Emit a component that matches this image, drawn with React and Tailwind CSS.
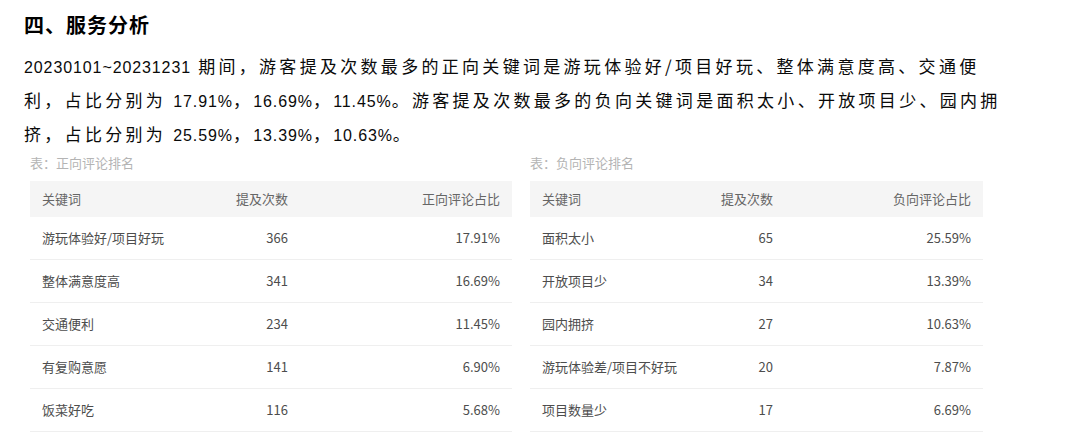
import React from "react";

const pos = [
  ["游玩体验好/项目好玩", "366", "17.91%"],
  ["整体满意度高", "341", "16.69%"],
  ["交通便利", "234", "11.45%"],
  ["有复购意愿", "141", "6.90%"],
  ["饭菜好吃", "116", "5.68%"],
];
const neg = [
  ["面积太小", "65", "25.59%"],
  ["开放项目少", "34", "13.39%"],
  ["园内拥挤", "27", "10.63%"],
  ["游玩体验差/项目不好玩", "20", "7.87%"],
  ["项目数量少", "17", "6.69%"],
];

function N({ children }) {
  return (
    <span className="font-['Liberation_Sans',sans-serif] text-[16px] tracking-[0.9px]">
      {children}
    </span>
  );
}

function Table({ caption, head, rows, width, cols }) {
  return (
    <div className={width}>
      <div className="h-[20px] leading-[20px] text-[13px] text-[#b4b4b4]">{caption}</div>
      <div className="mt-[8px]">
        <div className={`grid ${cols} h-[36px] items-center bg-[#f5f5f5] text-[13px] text-[#666]`}>
          <div className="pl-[12px]">{head[0]}</div>
          <div className="pr-[12px] text-right">{head[1]}</div>
          <div className="pr-[12px] text-right">{head[2]}</div>
        </div>
        {rows.map((r) => (
          <div
            key={r[0]}
            className={`grid ${cols} h-[43px] items-center border-b border-[#efefef] text-[13px] text-[#4d4d4d]`}
          >
            <div className="pl-[12px] whitespace-nowrap">{r[0]}</div>
            <div className="pr-[12px] text-right">{r[1]}</div>
            <div className="pr-[12px] text-right">{r[2]}</div>
          </div>
        ))}
      </div>
    </div>
  );
}

export default function App() {
  return (
    <div className="w-[1076px] h-[441px] bg-white overflow-hidden font-['Noto_Sans_CJK_SC',sans-serif]">
      <div className="px-[24px] pt-[11px]">
        <h1 className="text-[20px] leading-[28px] font-bold tracking-[1px] text-black">四、服务分析</h1>
        <div className="mt-[11px] text-[17px] leading-[32px] tracking-[3.3px] text-[#0a0a0a] whitespace-nowrap">
          <div>
            <N>20230101~20231231</N> 期间，游客提及次数最多的正向关键词是游玩体验好/项目好玩、整体满意度高、交通便
          </div>
          <div>
            利，占比分别为 <N>17.91%</N>，<N>16.69%</N>，<N>11.45%</N>。游客提及次数最多的负向关键词是面积太小、开放项目少、园内拥
          </div>
          <div>
            挤，占比分别为 <N>25.59%</N>，<N>13.39%</N>，<N>10.63%</N>。
          </div>
        </div>
      </div>
      <div className="mt-[1px] pl-[30px] flex gap-[18px]">
        <Table
          caption="表：正向评论排名"
          head={["关键词", "提及次数", "正向评论占比"]}
          rows={pos}
          width="w-[482px]"
          cols="grid-cols-[160px_110px_212px]"
        />
        <Table
          caption="表：负向评论排名"
          head={["关键词", "提及次数", "负向评论占比"]}
          rows={neg}
          width="w-[453px]"
          cols="grid-cols-[150px_105px_198px]"
        />
      </div>
    </div>
  );
}
